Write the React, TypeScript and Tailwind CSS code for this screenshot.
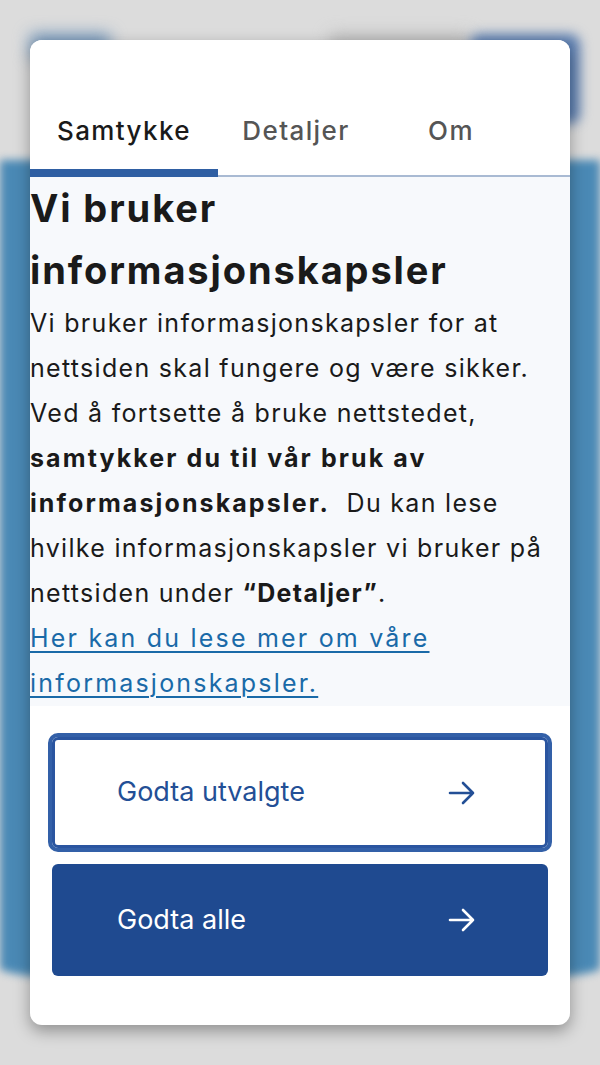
import React from 'react';

const tabs = [
  { label: 'Samtykke', width: 'w-[188px]', active: true },
  { label: 'Detaljer', width: 'w-[156px]', active: false },
  { label: 'Om', width: 'w-[154px]', active: false },
];

const Arrow: React.FC<{ className?: string }> = ({ className }) => (
  <svg width="28" height="24" viewBox="0 0 28 24" fill="none" className={className}>
    <path d="M2 12h23M15 2l10 10-10 10" stroke="currentColor" strokeWidth="2.6" strokeLinecap="round" strokeLinejoin="round" />
  </svg>
);

export default function App() {
  return (
    <div className="relative w-[600px] h-[1065px] overflow-hidden bg-[#dcdcdc] font-['Inter',sans-serif]">
      {/* blurred page behind the dialog */}
      <div className="absolute inset-0 pointer-events-none">
        <div className="absolute left-0 right-0 top-[160px] h-[826px] bg-[#4a89b5] rounded-b-[50%_18px] blur-[4px]" />
        <div className="absolute left-[30px] top-[34px] w-[80px] h-[24px] bg-[#6f93b8] blur-[8px]" />
        <div className="absolute left-[330px] top-[34px] w-[140px] h-[26px] bg-[#b9b9b9] blur-[8px]" />
        <div className="absolute left-[470px] top-[34px] w-[110px] h-[90px] bg-[#5a7db0] rounded-[10px] blur-[6px]" />
      </div>

      <div className="relative pt-[40px] px-[30px]">
        <div className="bg-white rounded-[12px] shadow-[0_6px_16px_rgba(0,0,0,0.35)] overflow-hidden h-[985px] flex flex-col">
          {/* tabs */}
          <div className="flex items-end h-[137px] border-b-2 border-[#a9bad3] bg-white">
            {tabs.map((t) => (
              <div
                key={t.label}
                className={`${t.width} -mb-[2px] pb-[22px] border-b-[8px] text-center text-[26px] leading-8 font-medium tracking-[1.4px] ${
                  t.active ? 'border-[#2f5fa3] text-[#1a1a1a]' : 'border-transparent text-[#555]'
                }`}
              >
                {t.label}
              </div>
            ))}
          </div>

          {/* content */}
          <div className="bg-[#f7f9fc] text-[#1a1a1a] whitespace-nowrap">
            <h1 className="text-[38px] leading-[62px] font-bold tracking-[1.9px]">
              Vi bruker
              <br />
              informasjonskapsler
            </h1>
            <p className="text-[25px] leading-[45px] tracking-[1.3px]">
              Vi bruker informasjonskapsler for at
              <br />
              nettsiden skal fungere og være sikker.
              <br />
              Ved å fortsette å bruke nettstedet,
              <br />
              <b className="font-bold tracking-[2.1px]">
                samtykker du til vår bruk av
                <br />
                informasjonskapsler.
              </b>
              &nbsp; Du kan lese
              <br />
              hvilke informasjonskapsler vi bruker på
              <br />
              nettsiden under <b className="font-bold">“Detaljer”</b>.
              <br />
              <a href="#" className="text-[#1a6aa8] tracking-[2.2px] underline underline-offset-4 decoration-2">
                Her kan du lese mer om våre
                <br />
                informasjonskapsler.
              </a>
            </p>
          </div>

          {/* buttons */}
          <div className="flex flex-col gap-[16px] px-[22px] pt-[31px]">
            <button className="flex items-center justify-between h-[111px] pl-[62px] pr-[69px] bg-white border-[3px] border-[#2a55a0] outline-[4px] outline-solid outline-[#3360a8] rounded-[6px] text-[#234f96] text-[27px]">
              <span>Godta utvalgte</span>
              <Arrow />
            </button>
            <button className="flex items-center justify-between h-[112px] pl-[65px] pr-[72px] bg-[#1f4a90] rounded-[6px] text-white text-[27px]">
              <span>Godta alle</span>
              <Arrow />
            </button>
          </div>
        </div>
      </div>
    </div>
  );
}
